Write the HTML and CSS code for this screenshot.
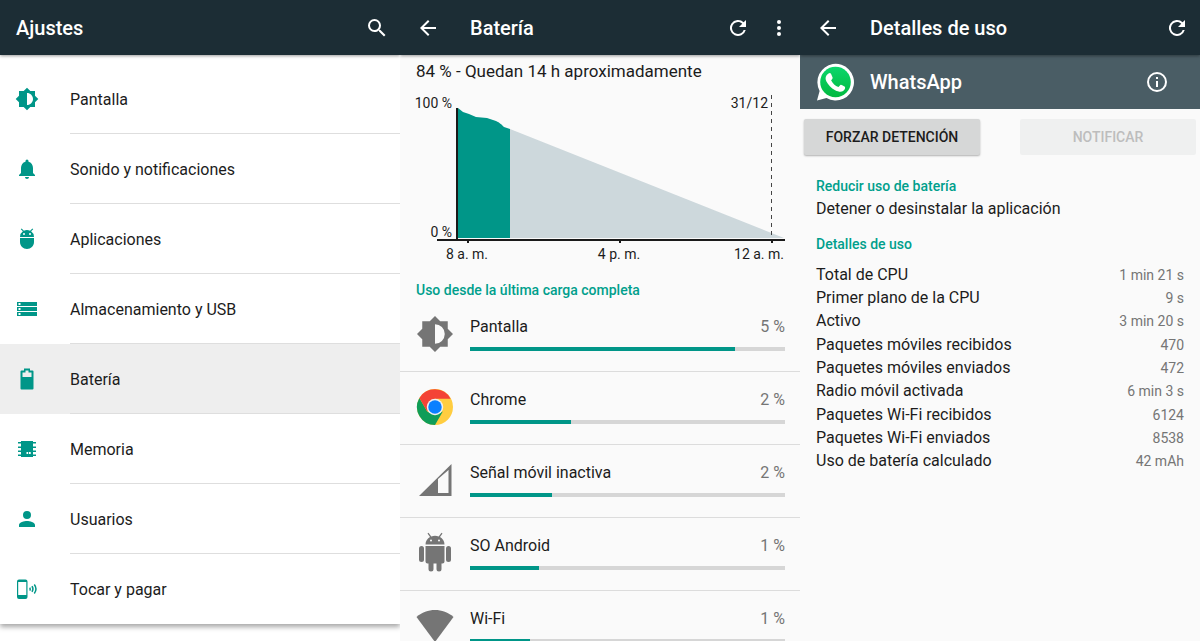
FILE: index.html
```html
<!DOCTYPE html>
<html lang="es">
<head>
    <meta charset="UTF-8">
    <meta name="viewport" content="width=device-width, initial-scale=1.0">
    <title>Ajustes - Batería</title>
    <link rel="stylesheet" href="styles.css">
</head>
<body>
    <div class="screens">
        <!-- Ajustes -->
        <section class="screen screen-settings">
            <header class="toolbar">
                <h1>Ajustes</h1>
                <button class="icon-btn" aria-label="Buscar">
                    <svg viewBox="0 0 24 24"><path d="M15.5 14h-.79l-.28-.27A6.47 6.47 0 0 0 16 9.500 6.500 6.500 0 1 0 9.500 16c1.610 0 3.090-.59 4.230-1.570l.27.28v.79l5 4.990L20.490 19l-4.990-5zm-6 0C7.010 14 5 11.990 5 9.500S7.010 5 9.500 5 14 7.010 14 9.500 11.990 14 9.500 14z"/></svg>
                </button>
            </header>
            <nav class="menu">
                <a href="#pantalla" class="menu-item">
                    <svg viewBox="0 0 24 24"><path fill-rule="evenodd" d="M20 15.310L23.310 12 20 8.690V4h-4.690L12 .69 8.690 4H4v4.690L.69 12 4 15.310V20h4.690L12 23.310 15.310 20H20zM12 18V6c3.310 0 6 2.690 6 6s-2.690 6-6 6z"/></svg>
                    <span>Pantalla</span>
                </a>
                <a href="#sonido" class="menu-item">
                    <svg viewBox="0 0 24 24"><path d="M12 22c1.100 0 2-.9 2-2h-4c0 1.100.9 2 2 2zm6-6v-5c0-3.070-1.640-5.640-4.500-6.320V4a1.500 1.500 0 0 0-3 0v.68C7.630 5.360 6 7.920 6 11v5l-2 2v1h16v-1z"/></svg>
                    <span>Sonido y notificaciones</span>
                </a>
                <a href="#aplicaciones" class="menu-item">
                    <svg viewBox="0 0 24 24"><path fill-rule="evenodd" d="M5 15c0 3.870 3.130 7 7 7s7-3.130 7-7v-4H5zM16.120 4.370l2.100-2.100-.82-.83-2.300 2.310A6.900 6.900 0 0 0 12 3c-1.120 0-2.180.27-3.110.75L6.600 1.440l-.83.83 2.100 2.100A6.980 6.980 0 0 0 5 10h14a6.980 6.980 0 0 0-2.880-5.630zM9 8a1 1 0 1 1 0-2 1 1 0 0 1 0 2zm6 0a1 1 0 1 1 0-2 1 1 0 0 1 0 2z"/></svg>
                    <span>Aplicaciones</span>
                </a>
                <a href="#almacenamiento" class="menu-item">
                    <svg viewBox="0 0 24 24"><path fill-rule="evenodd" d="M2 19h20v-4H2zm1.500-3h2v2h-2zM2 5v4h20V5zm3.500 3h-2V6h2zM2 14h20v-4H2zm1.500-3h2v2h-2z"/></svg>
                    <span>Almacenamiento y USB</span>
                </a>
                <a href="#bateria" class="menu-item selected">
                    <svg viewBox="0 0 24 24"><path fill-rule="evenodd" d="M17.500 3.500H15v-2H9v2H6.500a1 1 0 0 0-1 1v17a1 1 0 0 0 1 1h11a1 1 0 0 0 1-1v-17a1 1 0 0 0-1-1zM7.500 5.500h3v-2h3v2h3V10h-9z"/></svg>
                    <span>Batería</span>
                </a>
                <a href="#memoria" class="menu-item">
                    <svg viewBox="0 0 24 24"><path fill-rule="evenodd" d="M6 4h12v1h3v1.500h-3v3h3V11h-3v2.500h3V15h-3v2.500h3V19h-3v1H6v-1H3v-1.500h3V15H3v-1.500h3V11H3V9.500h3v-3H3V5h3zM11.500 15v2h1.700v-2zm2.500 0v2h1.700v-2z"/></svg>
                    <span>Memoria</span>
                </a>
                <a href="#usuarios" class="menu-item">
                    <svg viewBox="0 0 24 24"><path d="M12 12a4 4 0 1 0 0-8 4 4 0 0 0 0 8zm0 2c-2.670 0-8 1.340-8 4v2h16v-2c0-2.660-5.330-4-8-4z"/></svg>
                    <span>Usuarios</span>
                </a>
                <a href="#pagar" class="menu-item">
                    <svg viewBox="0 0 24 24"><path fill-rule="evenodd" d="M4 2.500h6.500a2 2 0 0 1 2 2V20a2 2 0 0 1-2 2H4a2 2 0 0 1-2-2V4.500a2 2 0 0 1 2-2zm-.8 2.500v13h8.100V5z"/><path class="waves" d="M14.800 10.500a3 3 0 0 1 0 3M17 9.200a5 5 0 0 1 0 5.600M19.300 7.500a7.500 7.500 0 0 1 0 9"/></svg>
                    <span>Tocar y pagar</span>
                </a>
            </nav>
        </section>

        <!-- Batería -->
        <section class="screen">
            <header class="toolbar with-overflow">
                <button class="icon-btn" aria-label="Atrás">
                    <svg viewBox="0 0 24 24"><path d="M20 11H7.830l5.590-5.590L12 4l-8 8 8 8 1.410-1.410L7.830 13H20z"/></svg>
                </button>
                <h1>Batería</h1>
                <button class="icon-btn" aria-label="Actualizar">
                    <svg viewBox="0 0 24 24"><path d="M17.650 6.350A8 8 0 1 0 19.730 14h-2.080A6 6 0 1 1 12 6c1.660 0 3.140.69 4.220 1.780L13 11h7V4z"/></svg>
                </button>
                <button class="icon-btn" aria-label="Más opciones">
                    <svg viewBox="0 0 24 24"><circle cx="12" cy="6" r="2"/><circle cx="12" cy="12" r="2"/><circle cx="12" cy="18" r="2"/></svg>
                </button>
            </header>
            <p class="summary">84 % - Quedan 14 h aproximadamente</p>
            <svg class="chart" viewBox="0 0 400 180" role="img" aria-label="Nivel de batería">
                <path class="forecast" d="M110 39L384 148H110z"/>
                <path class="used" d="M58 18l5 4 6 2 7 3 11 1 9 3c4 2 5 3 8 6l6 2v109H58z"/>
                <path class="axis" d="M57 18v132M37 150h348"/>
                <path class="axis" d="M68 150v3M220 150v3M372 150v3"/>
                <path class="midnight" d="M371.500 5v144"/>
                <text x="52" y="18" text-anchor="end">100 %</text>
                <text x="52" y="147" text-anchor="end">0 %</text>
                <text x="368" y="18" text-anchor="end">31/12</text>
                <text x="67" y="169" text-anchor="middle">8 a. m.</text>
                <text x="219" y="169" text-anchor="middle">4 p. m.</text>
                <text x="384" y="169" text-anchor="end">12 a. m.</text>
            </svg>
            <h2 class="category">Uso desde la última carga completa</h2>
            <ul class="usage">
                <li class="usage-item">
                    <svg viewBox="0 0 24 24"><path fill-rule="evenodd" d="M20.500 15.500L24 12l-3.500-3.500v-5h-5L12 0 8.500 3.500h-5v5L0 12l3.500 3.500v5h5L12 24l3.500-3.500h5zM12 18.500v-13a6.500 6.500 0 0 1 0 13z"/></svg>
                    <div class="usage-info">
                        <div class="usage-text"><span>Pantalla</span><span class="percent">5 %</span></div>
                        <div class="bar"><div class="bar-fill" style="width: 84%"></div></div>
                    </div>
                </li>
                <li class="usage-item">
                    <svg viewBox="0 0 48 48">
                        <circle cx="24" cy="24" r="24" fill="#ffcd40"/>
                        <path fill="#0f9d58" d="M3.200 12L13.600 30 24 35 34.400 30 24 48A24 24 0 0 1 3.200 12z"/>
                        <path fill="#f44336" d="M3.200 12A24 24 0 0 1 44.800 13H24L13.600 30z"/>
                        <circle cx="24" cy="24" r="11" fill="#f1f1f1"/>
                        <circle cx="24" cy="24" r="9" fill="#0a80ff"/>
                    </svg>
                    <div class="usage-info">
                        <div class="usage-text"><span>Chrome</span><span class="percent">2 %</span></div>
                        <div class="bar"><div class="bar-fill" style="width: 32%"></div></div>
                    </div>
                </li>
                <li class="usage-item">
                    <svg viewBox="0 0 36 36"><path fill-rule="evenodd" d="M2 34L34.500 2v32zM21 17v14h10.500V8z"/></svg>
                    <div class="usage-info">
                        <div class="usage-text"><span>Señal móvil inactiva</span><span class="percent">2 %</span></div>
                        <div class="bar"><div class="bar-fill" style="width: 26%"></div></div>
                    </div>
                </li>
                <li class="usage-item">
                    <svg viewBox="0 0 36 36"><path fill-rule="evenodd" d="M8.500 9.500C8.500 6 10.500 3.500 13 2L10.500-1.500l1-.8L14.300 1.400a11 11 0 0 1 7.400 0L24.500-2.300l1 .8L23 2c2.500 1.500 4.500 4 4.500 7.500zM14 4.500a1 1 0 1 0 0 2 1 1 0 0 0 0-2zm8 0a1 1 0 1 0 0 2 1 1 0 0 0 0-2zM8.500 11h19v15.500a2 2 0 0 1-2 2h-1V34a2.500 2.500 0 0 1-5 0v-5.500h-3V34a2.500 2.500 0 0 1-5 0v-5.500h-1a2 2 0 0 1-2-2z"/><rect x="2" y="11" width="5" height="16" rx="2.500"/><rect x="29" y="11" width="5" height="16" rx="2.500"/></svg>
                    <div class="usage-info">
                        <div class="usage-text"><span>SO Android</span><span class="percent">1 %</span></div>
                        <div class="bar"><div class="bar-fill" style="width: 22%"></div></div>
                    </div>
                </li>
                <li class="usage-item">
                    <svg viewBox="0 0 36 36"><path d="M-.5 9C10-.3 26-.3 36.500 9L18 34z"/></svg>
                    <div class="usage-info">
                        <div class="usage-text"><span>Wi-Fi</span><span class="percent">1 %</span></div>
                        <div class="bar"><div class="bar-fill" style="width: 19%"></div></div>
                    </div>
                </li>
            </ul>
        </section>

        <!-- Detalles de uso -->
        <section class="screen">
            <header class="toolbar">
                <button class="icon-btn" aria-label="Atrás">
                    <svg viewBox="0 0 24 24"><path d="M20 11H7.830l5.590-5.590L12 4l-8 8 8 8 1.410-1.410L7.830 13H20z"/></svg>
                </button>
                <h1>Detalles de uso</h1>
                <button class="icon-btn" aria-label="Actualizar">
                    <svg viewBox="0 0 24 24"><path d="M17.650 6.350A8 8 0 1 0 19.730 14h-2.080A6 6 0 1 1 12 6c1.660 0 3.140.69 4.220 1.780L13 11h7V4z"/></svg>
                </button>
            </header>
            <div class="app-header">
                <svg class="app-icon" viewBox="0 0 38 38">
                    <defs><linearGradient id="wa" x1="0" y1="0" x2="0" y2="1"><stop offset="0" stop-color="#0bd66c"/><stop offset="1" stop-color="#02b93f"/></linearGradient></defs>
                    <path fill="#fff" d="M1 37.500l2.600-9.600A18.300 18.300 0 1 1 10.500 35z"/>
                    <circle cx="19.500" cy="19" r="15.300" fill="url(#wa)"/>
                    <path fill="#fff" d="M12.500 10.500c.8-.7 2-.7 2.500.3l1.600 3.700c.3.8-.8 2-1.500 2.800 1.700 3.400 4 5.500 7.300 6.800.8-.7 1.700-2.300 2.500-2.300.5 0 3.200 1.400 4 1.900.7 1-.2 3.300-1.800 4.300-2 1.200-4.600.8-8-.8-4-2-7-5.500-8.800-8.900-1.500-3-.7-6 2.200-7.800z"/>
                </svg>
                <h2>WhatsApp</h2>
                <button class="icon-btn" aria-label="Información de la aplicación">
                    <svg viewBox="0 0 24 24"><path d="M11 17h2v-6h-2zm1-15a10 10 0 1 0 0 20 10 10 0 0 0 0-20zm0 18a8 8 0 1 1 0-16 8 8 0 0 1 0 16zM11 9h2V7h-2z"/></svg>
                </button>
            </div>
            <div class="actions">
                <button class="action-btn">FORZAR DETENCIÓN</button>
                <button class="action-btn" disabled>NOTIFICAR</button>
            </div>
            <h3 class="category">Reducir uso de batería</h3>
            <p class="hint">Detener o desinstalar la aplicación</p>
            <h3 class="category">Detalles de uso</h3>
            <table class="details">
                <tr><th scope="row">Total de CPU</th><td>1 min 21 s</td></tr>
                <tr><th scope="row">Primer plano de la CPU</th><td>9 s</td></tr>
                <tr><th scope="row">Activo</th><td>3 min 20 s</td></tr>
                <tr><th scope="row">Paquetes móviles recibidos</th><td>470</td></tr>
                <tr><th scope="row">Paquetes móviles enviados</th><td>472</td></tr>
                <tr><th scope="row">Radio móvil activada</th><td>6 min 3 s</td></tr>
                <tr><th scope="row">Paquetes Wi-Fi recibidos</th><td>6124</td></tr>
                <tr><th scope="row">Paquetes Wi-Fi enviados</th><td>8538</td></tr>
                <tr><th scope="row">Uso de batería calculado</th><td>42 mAh</td></tr>
            </table>
        </section>
    </div>
</body>
</html>
```
FILE: styles.css
```css
:root {
    --toolbar: #1c2d35;
    --app-header: #4a5d65;
    --accent: #009688;
    --accent-text: #009f8c;
    --bg: #fafafa;
    --text: #1c1c1c;
    --text-light: #757575;
}

* {
    box-sizing: border-box;
}

body {
    margin: 0;
    font-family: Roboto, sans-serif;
    font-size: 16px;
    line-height: 20px;
    color: var(--text);
    background: var(--bg);
}

h1, h2, h3, p, ul {
    margin: 0;
    padding: 0;
}

.screens {
    display: grid;
    grid-template-columns: repeat(3, 1fr);
    height: 100vh;
    overflow: hidden;
}

.screen {
    background: var(--bg);
    overflow: hidden;
}

.screen-settings {
    background: #fff;
}

/* Barra superior */
.toolbar {
    display: flex;
    align-items: center;
    gap: 17px;
    height: 55px;
    padding: 0 11px 0 16px;
    background: var(--toolbar);
    color: #fff;
    box-shadow: 0 1px 3px rgba(0, 0, 0, 0.4);
    position: relative;
}

.toolbar.with-overflow {
    padding-right: 9px;
}

.toolbar h1 {
    flex: 1;
    font-size: 20px;
    font-weight: 500;
    line-height: 24px;
}

.icon-btn + h1 {
    margin-left: 13px;
}

.icon-btn {
    width: 24px;
    height: 24px;
    padding: 0;
    border: none;
    background: transparent;
    color: #fff;
    cursor: pointer;
}

.icon-btn svg {
    display: block;
    fill: currentColor;
}

/* Lista de ajustes */
.menu {
    padding-top: 9px;
    box-shadow: 0 3px 5px rgba(0, 0, 0, 0.35);
}

.menu-item {
    display: flex;
    align-items: center;
    height: 70px;
    padding-left: 15px;
    color: var(--text);
    text-decoration: none;
}

.menu-item svg {
    width: 24px;
    height: 24px;
    fill: var(--accent);
}

.menu-item .waves {
    fill: none;
    stroke: var(--accent);
    stroke-width: 1.5;
}

.menu-item span {
    display: flex;
    align-items: center;
    flex: 1;
    height: 70px;
    margin-left: 31px;
    padding-top: 2px;
    border-bottom: 1px solid #dedede;
}

.menu-item:last-child span {
    border-bottom: none;
}

.menu-item.selected {
    background: #eee;
}

/* Batería */
.summary {
    padding: 6px 16px 0;
    font-size: 17px;
}

.chart {
    display: block;
    width: 100%;
    margin-top: 9px;
}

.chart text {
    font-size: 14px;
    fill: var(--text);
}

.chart .used {
    fill: var(--accent);
}

.chart .forecast {
    fill: #cdd8dc;
}

.chart .axis {
    fill: none;
    stroke: #1a1a1a;
    stroke-width: 2;
}

.chart .midnight {
    stroke: #444;
    stroke-width: 1;
    stroke-dasharray: 4 4;
}

.category {
    padding: 0 16px;
    font-size: 14px;
    font-weight: 500;
    line-height: 18px;
    color: var(--accent-text);
}

.chart + .category {
    margin-top: 11px;
}

.usage {
    list-style: none;
}

.usage-item {
    display: flex;
    align-items: center;
    height: 73px;
    padding: 0 15px 2px 17px;
    border-bottom: 1px solid #dcdcdc;
}

.usage-item > svg {
    width: 36px;
    height: 36px;
    fill: #757575;
    overflow: visible;
}

.usage-info {
    flex: 1;
    margin-left: 17px;
}

.usage-text {
    display: flex;
    justify-content: space-between;
}

.percent {
    color: var(--text-light);
}

.bar {
    height: 4px;
    margin-top: 10px;
    background: #d6d6d6;
}

.bar-fill {
    height: 100%;
    background: var(--accent);
}

/* Detalles de uso */
.app-header {
    display: flex;
    align-items: center;
    height: 54px;
    padding: 0 31px 0 16px;
    background: var(--app-header);
    color: #fff;
}

.app-icon {
    width: 38px;
    height: 38px;
}

.app-header h2 {
    flex: 1;
    margin-left: 16px;
    font-size: 20px;
    font-weight: 500;
    line-height: 24px;
}

.actions {
    display: grid;
    grid-template-columns: 1fr 1fr;
    gap: 40px;
    padding: 10px 4px 22px;
}

.action-btn {
    height: 36px;
    border: none;
    border-radius: 2px;
    background: #d6d7d7;
    color: var(--text);
    font-family: inherit;
    font-size: 14px;
    font-weight: 500;
    box-shadow: 0 1px 2px rgba(0, 0, 0, 0.3);
}

.action-btn:disabled {
    background: #eff0f0;
    color: #bdbdbd;
    box-shadow: none;
}

.hint {
    padding: 4px 16px 16px;
}

.details {
    width: 100%;
    height: 210px;
    margin-top: 10px;
    padding: 0 16px;
    border-spacing: 0;
}

.details th,
.details td {
    padding: 0;
    font-weight: 400;
    text-align: left;
}

.details td {
    font-size: 14px;
    color: var(--text-light);
    text-align: right;
}
```
